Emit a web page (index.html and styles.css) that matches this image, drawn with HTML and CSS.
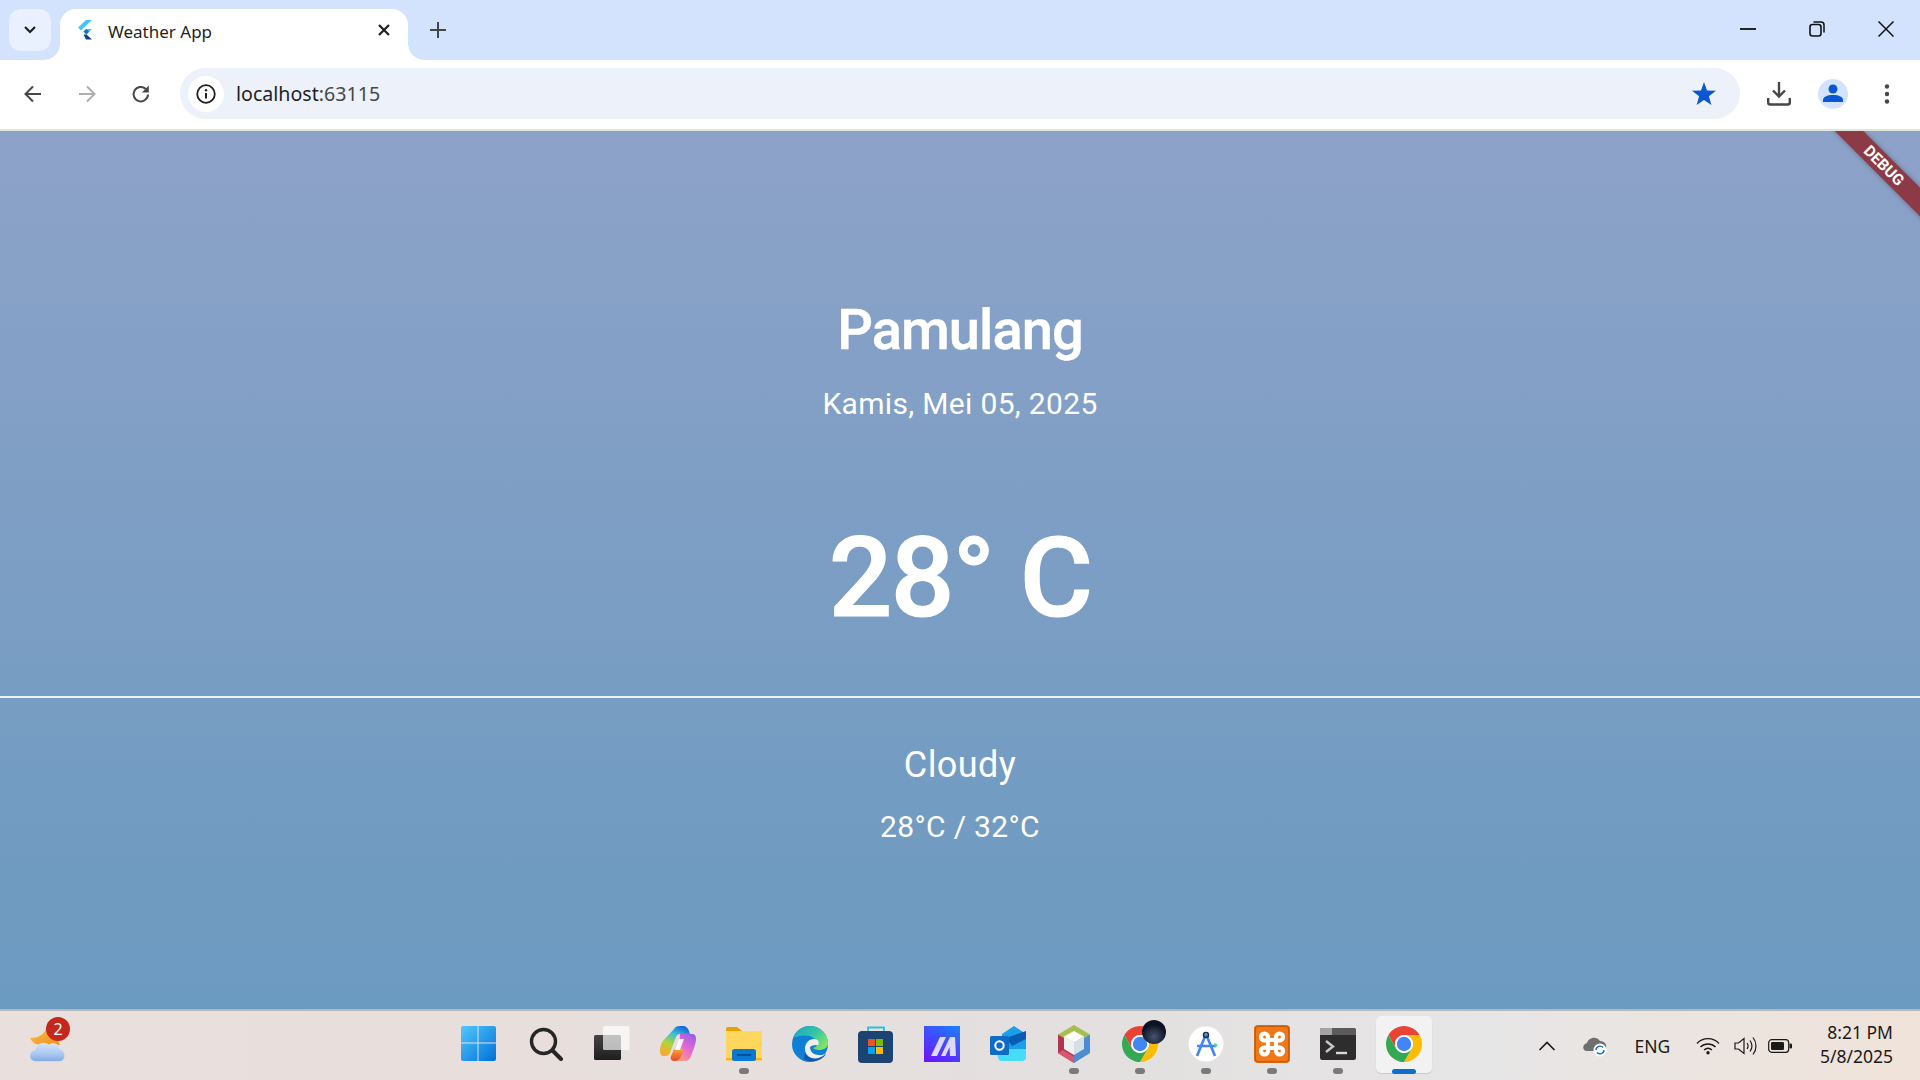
FILE: index.html
```html
<!DOCTYPE html>
<html lang="id">
<head>
<meta charset="utf-8">
<title>Weather App</title>
<link rel="stylesheet" href="styles.css">
</head>
<body>
<svg class="defs" width="0" height="0" aria-hidden="true">
  <symbol id="chrome" viewBox="0 0 40 40">
    <path fill="#ea4335" d="M2.7 10A20 20 0 0 1 37.3 10H20A10 10 0 0 0 11.34 25Z"/>
    <path fill="#fbbc04" d="M37.3 10A20 20 0 0 1 20 40L28.66 25A10 10 0 0 0 20 10Z"/>
    <path fill="#34a853" d="M20 40A20 20 0 0 1 2.7 10L11.34 25A10 10 0 0 0 28.66 25Z"/>
    <circle cx="20" cy="20" r="10" fill="#fff"/>
    <circle cx="20" cy="20" r="8" fill="#4285f4"/>
  </symbol>
</svg>
<div class="window">
  <header class="tabstrip">
    <div class="tabsearch">
      <svg width="14" height="10" viewBox="0 0 14 10"><path d="M2 2l5 5 5-5" fill="none" stroke="#1f1f1f" stroke-width="2.2"/></svg>
    </div>
    <div class="tab">
      <svg class="favicon" width="16" height="20" viewBox="0 0 16 20">
        <path fill="#45c6f6" d="M9 0h6L4 10.5 1 7.5z"/>
        <path fill="#45c6f6" d="M9 9h6l-5.5 5.5-3-3z"/>
        <path fill="#1d6fc4" d="M6.500 11.500l3-2.500 2.500 2.500-2.500 3z"/>
        <path fill="#0f3f8f" d="M6.500 14.500l3 0 5.500 5h-6z"/>
      </svg>
      <span class="tabtitle">Weather App</span>
      <svg class="tabclose" width="14" height="14" viewBox="0 0 14 14"><path d="M2 2l10 10M12 2L2 12" stroke="#1f1f1f" stroke-width="2.200"/></svg>
    </div>
    <svg class="newtab" width="16" height="16" viewBox="0 0 16 16"><path d="M8 0v16M0 8h16" stroke="#444746" stroke-width="2"/></svg>
    <div class="winctl">
      <svg width="16" height="16" viewBox="0 0 16 16"><path d="M0 8h16" stroke="#111" stroke-width="1.800"/></svg>
      <svg width="16" height="16" viewBox="0 0 16 16"><rect x="1" y="3.500" width="11" height="11.500" rx="2.500" fill="none" stroke="#111" stroke-width="1.600"/><path d="M4.500 1h7.500a3 3 0 0 1 3 3v7.500" fill="none" stroke="#111" stroke-width="1.500"/></svg>
      <svg width="16" height="16" viewBox="0 0 16 16"><path d="M.5.500l15 15M15.500.500l-15 15" stroke="#111" stroke-width="1.500"/></svg>
    </div>
  </header>

  <nav class="toolbar">
    <div class="tbtn"><svg width="20" height="20" viewBox="0 0 20 20"><path d="M18 10H3M10 2.500L2.500 10l7.500 7.500" fill="none" stroke="#474747" stroke-width="2"/></svg></div>
    <div class="tbtn"><svg width="20" height="20" viewBox="0 0 20 20"><path d="M2 10h15M10 2.500l7.500 7.500-7.500 7.500" fill="none" stroke="#aeaeae" stroke-width="2"/></svg></div>
    <div class="tbtn"><svg width="20" height="20" viewBox="0 0 20 20"><path d="M17 10.500A7.200 7.200 0 1 1 14.800 5" fill="none" stroke="#474747" stroke-width="2"/><path d="M17.800 1.500v7h-7z" fill="#474747"/></svg></div>
    <div class="omnibox">
      <div class="chip"><svg width="20" height="20" viewBox="0 0 20 20"><circle cx="10" cy="10" r="8.800" fill="none" stroke="#1f1f1f" stroke-width="1.800"/><path d="M10 9v5.500" stroke="#1f1f1f" stroke-width="2"/><circle cx="10" cy="6.200" r="1.200" fill="#1f1f1f"/></svg></div>
      <span class="url">localhost<span class="port">:63115</span></span>
      <svg class="star" width="24" height="23" viewBox="0 0 24 23"><path fill="#0b57d0" d="M12 0l3 8.400 9 .3-7.100 5.500 2.500 8.800L12 17.900 4.600 23l2.500-8.800L0 8.700l9-.3z"/></svg>
    </div>
    <div class="tbtn first"><svg width="24" height="24" viewBox="0 0 24 24"><path d="M12 0v14M6 8.500l6 6 6-6" fill="none" stroke="#474747" stroke-width="2.400"/><path d="M1.200 16v4.500a2 2 0 0 0 2 2h17.600a2 2 0 0 0 2-2V16" fill="none" stroke="#474747" stroke-width="2.400"/></svg></div>
    <div class="tbtn"><div class="avatar"><svg width="20" height="20" viewBox="0 0 20 20"><circle cx="10" cy="5" r="4.500" fill="#0b57d0"/><path fill="#0b57d0" d="M0 18v-2c0-3 4-5 10-5s10 2 10 5v2z"/></svg></div></div>
    <div class="tbtn"><svg width="6" height="20" viewBox="0 0 6 20"><circle cx="3" cy="2.500" r="2.200" fill="#474747"/><circle cx="3" cy="10" r="2.200" fill="#474747"/><circle cx="3" cy="17.500" r="2.200" fill="#474747"/></svg></div>
  </nav>

  <main class="app">
    <h1 class="city">Pamulang</h1>
    <p class="date">Kamis, Mei 05, 2025</p>
    <p class="temp">28° C</p>
    <hr class="rule">
    <p class="cond">Cloudy</p>
    <p class="range">28°C / 32°C</p>
    <div class="debug">DEBUG</div>
  </main>

  <footer class="taskbar">
    <div class="widget">
      <svg width="40" height="38" viewBox="0 0 40 38">
        <defs><linearGradient id="cl" x1="0" y1="0" x2="0" y2="1"><stop offset="0" stop-color="#d4e3f8"/><stop offset=".6" stop-color="#a9c8f0"/><stop offset="1" stop-color="#7ea9e3"/></linearGradient>
        <linearGradient id="mn" x1="0" y1="0" x2="1" y2="1"><stop offset="0" stop-color="#f8c044"/><stop offset="1" stop-color="#ef8f22"/></linearGradient></defs>
        <path fill="url(#mn)" d="M18 1c0 6-6 11-16 11 3 5 6 7 12 7h18l-6-14c-3-2-5-3-8-4z"/>
        <path fill="url(#cl)" stroke="#e3ecf8" stroke-width=".5" d="M8 35.500c-8 0-8-10.500-1-11.500 1-6 9-9 14-5 4-3 10-1 11 4 6 1 7 12.500-1 12.500z"/>
      </svg>
      <span class="badge">2</span>
    </div>
    <div class="apps">
      <div class="app-btn"><svg class="win" width="35" height="35" viewBox="0 0 36 36"><defs><linearGradient id="w" x1="0" y1="0" x2="1" y2="1"><stop offset="0" stop-color="#52c8fb"/><stop offset="1" stop-color="#0070d8"/></linearGradient></defs><path fill="url(#w)" d="M2 0h15v17H0V2a2 2 0 0 1 2-2zM18 0h16a2 2 0 0 1 2 2v15H18zM0 18h17v18H2a2 2 0 0 1-2-2zM18 18h18v16a2 2 0 0 1-2 2H18z"/></svg></div>
      <div class="app-btn"><svg width="34" height="34" viewBox="0 0 34 34"><circle cx="14.500" cy="14.500" r="12" fill="none" stroke="#262626" stroke-width="3.400"/><path d="M23.500 23.500L32 32" stroke="#262626" stroke-width="4" stroke-linecap="round"/></svg></div>
      <div class="app-btn"><svg width="36" height="36" viewBox="0 0 36 36"><defs><linearGradient id="tv" x1="0" y1="0" x2="0" y2="1"><stop offset="0" stop-color="#444"/><stop offset="1" stop-color="#1e1e1e"/></linearGradient></defs><rect x="0" y="9" width="27" height="25" rx="1.500" fill="url(#tv)"/><rect x="9" y="0" width="26.500" height="24" rx="1.500" fill="#fff" fill-opacity=".68"/></svg></div>
      <div class="app-btn"><svg width="36" height="36" viewBox="0 0 36 36"><defs><linearGradient id="c1" x1=".7" y1="0" x2=".3" y2="1"><stop offset="0" stop-color="#1467d8"/><stop offset=".3" stop-color="#35c0d8"/><stop offset=".65" stop-color="#b7d334"/><stop offset="1" stop-color="#f9a833"/></linearGradient><linearGradient id="c2" x1=".8" y1="0" x2=".2" y2="1"><stop offset="0" stop-color="#9a5ee8"/><stop offset=".5" stop-color="#e86ad0"/><stop offset="1" stop-color="#f6a37a"/></linearGradient><linearGradient id="c3" x1=".5" y1="0" x2=".5" y2="1"><stop offset="0" stop-color="#f9a833"/><stop offset="1" stop-color="#e8452c"/></linearGradient></defs><path fill="url(#c2)" d="M20 8h12c3 0 4 2 4 5 0 3-1 6-2 9l-3 8c-1 3-3 5-7 5H14c3-2 4-4 5-7z"/><path fill="url(#c1)" d="M14 3c1-2 3-3 6-3h3c3 0 5 2 6 5l1 3H20c-2 0-3 1-4 3l-6 16c-1 2-2 3-5 3H4c-3 0-4-2-4-6 0-3 1-5 2-8z"/><path fill="url(#c3)" d="M14 35c-3 0-4-3-3-5l3-7h10l-3 7c-1 3-3 5-7 5z"/><path fill="#fff" fill-opacity=".9" d="M19 13h5l-4 11h-5z"/></svg></div>
      <div class="app-btn"><svg width="36" height="34" viewBox="0 0 36 34"><path fill="#e3a400" d="M0 2a2 2 0 0 1 2-2h9l5 4h20v6H0z"/><path fill="#ffd75e" d="M0 4h36v29H0z"/><rect y="31" width="36" height="2.500" fill="#f8b90f"/><rect x="6" y="22" width="24" height="12" rx="2.500" fill="#0a78d0"/><path d="M11 28h14" stroke="#043e79" stroke-width="1.400"/></svg></div>
      <div class="app-btn"><svg width="36" height="36" viewBox="0 0 36 36"><defs><linearGradient id="e1" x1="0" y1="0" x2="1" y2=".6"><stop offset="0" stop-color="#1aa5c8"/><stop offset=".6" stop-color="#35c6a2"/><stop offset="1" stop-color="#7fe06a"/></linearGradient></defs><circle cx="18" cy="18" r="18" fill="#0f7fd6"/><path fill="url(#e1)" d="M1 12C4 4 11 0 18 0c10 0 18 8 18 17 0 5-4 7-9 7-3 0-5-1-6-2 4-1 6-5 2-9-5-5-16-4-22-1z"/><path fill="#0d5aa7" d="M12 33c8 5 19 1 22-5-4 3-9 4-14 2-3-1-5-4-5-7-1 3-3 6-3 10z"/><path fill="#f0eeee" d="M13 23c0-6 4-10 9-10 4 0 6 3 4 6-2 0-6 0-8 2 0 5 4 8 9 8 2 0 4 0 6-1-4 5-13 6-17 2-2-2-3-4-3-7z"/></svg></div>
      <div class="app-btn"><svg width="36" height="38" viewBox="0 0 36 38"><path d="M10 7V2.500h16V7" fill="none" stroke="#28c0e8" stroke-width="1.800"/><rect y="6" width="35" height="32" rx="4" fill="#1b4472"/><rect x="10" y="14" width="7" height="7" fill="#f25022"/><rect x="18" y="14" width="7" height="7" fill="#7fba00"/><rect x="10" y="22" width="7" height="7" fill="#00a4ef"/><rect x="18" y="22" width="7" height="7" fill="#ffb900"/></svg></div>
      <div class="app-btn"><svg width="36" height="36" viewBox="0 0 36 36"><defs><linearGradient id="m" x1=".8" y1="0" x2=".2" y2="1"><stop offset="0" stop-color="#1f79ff"/><stop offset="1" stop-color="#6a16ff"/></linearGradient></defs><rect width="36" height="36" fill="url(#m)"/><path fill="#dcd8ff" d="M7 30L16 11h6L13 30zM17 30l9-19h5l1 19h-6l-.5-9-4 9z"/></svg></div>
      <div class="app-btn"><svg width="36" height="36" viewBox="0 0 36 36"><path fill="#1aa0e8" d="M12 8L24 0l12 8v22a4 4 0 0 1-4 4H12z"/><path fill="#0a5cb2" d="M16 12L36 5v8L22 20z"/><path fill="#48dcfb" d="M7 23h29v8a4 4 0 0 1-4 4H12a4 4 0 0 1-4-3z"/><rect y="10" width="19" height="19" rx="1.500" fill="#0f6cc4"/><circle cx="9.500" cy="19.500" r="4.200" fill="none" stroke="#fff" stroke-width="2"/></svg></div>
      <div class="app-btn"><svg width="34" height="38" viewBox="0 0 34 38"><path fill="#a6c050" d="M17 0l16 9.500-16 9-16-9z"/><path fill="#4e8bd0" d="M33 9.500V28L17 38V18.500z"/><path fill="#b3344f" d="M1 9.500V28l16 10V18.500z"/><path fill="#d8566e" d="M1 28l5-3 11 6.500V38z"/><path fill="#fff" d="M17 6l10 5.500-10 6-10-6z"/><path fill="#f0f0f2" d="M7 11.500l10 6V30L7 24z"/><path fill="#d5dfe9" d="M27 11.500l-10 6V30l10-6z"/></svg></div>
      <div class="app-btn">
        <svg width="36" height="36" viewBox="0 0 36 36"><use href="#chrome"/></svg>
        <span class="dark-ball"></span>
      </div>
      <div class="app-btn"><svg width="36" height="36" viewBox="0 0 36 36"><circle cx="18" cy="18" r="17.500" fill="#fff"/><path d="M18 8L9 30M18 8l9 22M9 20h18" fill="none" stroke="#4285f4" stroke-width="2.600"/><circle cx="18" cy="9" r="2.500" fill="none" stroke="#1f2a44" stroke-width="1.500"/><path d="M26 17l4 2-3 3z" fill="#3ddc84"/></svg></div>
      <div class="app-btn"><svg width="36" height="38" viewBox="0 0 36 38"><rect width="36" height="38" rx="4" fill="#f07818"/><rect x="1.200" y="1.200" width="33.600" height="35.600" rx="3" fill="none" stroke="#c75d0a" stroke-width="1.500"/><path d="M14 15h8v8h-8zM14 15v-3a3.500 3.500 0 1 0-3.500 3.500zM22 15v-3a3.500 3.500 0 1 1 3.500 3.500zM14 23v3a3.500 3.500 0 1 1-3.500-3.500zM22 23v3a3.500 3.500 0 1 0 3.500-3.500z" fill="none" stroke="#fff" stroke-width="4.200"/></svg></div>
      <div class="app-btn"><svg width="36" height="32" viewBox="0 0 36 32"><rect width="36" height="32" rx="2.500" fill="#2d2d2d"/><path d="M0 2.500A2.500 2.500 0 0 1 2.500 0H33.500A2.500 2.500 0 0 1 36 2.500V7H0z" fill="#5b5b5b"/><path d="M0 2.500A2.500 2.500 0 0 1 2.500 0H12V7H0z" fill="#a3a3a3"/><path d="M6 13l7 5.500-7 5.500" fill="none" stroke="#c8c8c8" stroke-width="2.400"/><path d="M16 25h11" stroke="#d8d8d8" stroke-width="2.400"/></svg></div>
      <div class="app-btn active"><svg width="36" height="36" viewBox="0 0 36 36"><use href="#chrome"/></svg></div>
    </div>
    <div class="tray">
      <svg class="t-up" width="18" height="10" viewBox="0 0 18 10"><path d="M1.500 9L9 1.500 16.500 9" fill="none" stroke="#1a1a1a" stroke-width="1.700"/></svg>
      <svg class="t-cloud" width="26" height="22" viewBox="0 0 26 22"><path fill="#6f6f6f" d="M5 16c-5 0-5-7 0-8 1-5 9-8 13-2 5 0 7 4 6 7l-5 3z"/><circle cx="18" cy="15" r="6.500" fill="#fff"/><path d="M14 15a4 4 0 0 1 7-2.500M22 15a4 4 0 0 1-7 2.500" fill="none" stroke="#0f6cc4" stroke-width="1.400"/></svg>
      <span class="lang">ENG</span>
      <svg class="t-wifi" width="24" height="18" viewBox="0 0 24 18"><path d="M1 6.500c6-6.500 16-6.500 22 0M4.500 10c4-4 11-4 15 0M8 13c2.500-2.200 5.500-2.200 8 0" fill="none" stroke="#1a1a1a" stroke-width="1.300"/><circle cx="12" cy="15.800" r="1.700" fill="#1a1a1a"/></svg>
      <svg class="t-vol" width="24" height="20" viewBox="0 0 24 20"><path d="M1 7h3.500L10 2.500v15L4.500 13H1z" fill="none" stroke="#1a1a1a" stroke-width="1.200"/><path d="M13 7c1.500 2 1.500 4 0 6M16 4.500c2.500 3.500 2.500 7.500 0 11M19 1.500c4 5 4 12 0 17" fill="none" stroke="#1a1a1a" stroke-width="1.200"/></svg>
      <svg class="t-bat" width="24" height="14" viewBox="0 0 24 14"><rect x=".7" y=".7" width="20" height="12.600" rx="3" fill="none" stroke="#1a1a1a" stroke-width="1.200"/><rect x="3" y="3" width="13" height="8" rx="1.200" fill="#1a1a1a"/><rect x="21.500" y="4.500" width="2.500" height="5" rx="1" fill="#1a1a1a"/></svg>
      <div class="clock"><span>8:21 PM</span><span>5/8/2025</span></div>
    </div>
  </footer>
</div>
</body>
</html>
```
FILE: styles.css
```css
* { box-sizing: border-box; }
html, body { margin: 0; height: 100%; }
body { font-family: "Noto Sans", sans-serif; overflow: hidden; }
.defs { position: absolute; }
.window { display: flex; flex-direction: column; height: 1080px; }

.tabstrip { height: 60px; flex: none; background: #d3e3fd; display: flex; align-items: flex-start; padding: 9px 0 0 9px; }
.tabsearch { width: 42px; height: 42px; border-radius: 12px; background: #e9f0fe; display: flex; align-items: center; justify-content: center; }
.tab { position: relative; width: 348px; height: 51px; margin-left: 9px; background: #fff; border-radius: 16px 16px 0 0; display: flex; align-items: center; padding: 0 17px 7px; }
.tab::before, .tab::after { content: ""; position: absolute; bottom: 0; width: 16px; height: 16px; }
.tab::before { left: -16px; background: radial-gradient(circle at 0 0, transparent 15.5px, #fff 16px); }
.tab::after { right: -16px; background: radial-gradient(circle at 100% 0, transparent 15.5px, #fff 16px); }
.favicon { margin-top: -2px; }
.tabtitle { margin-left: 15px; font-size: 17px; color: #1f1f1f; flex: 1; margin-top: 1px; }
.tabclose { margin-top: -2px; }
.newtab { margin: 13px 0 0 22px; }
.winctl { margin-left: auto; display: flex; gap: 53px; padding: 12px 26px 0 0; }

.toolbar { height: 71px; flex: none; background: #fff; border-radius: 16px 16px 0 0; border-bottom: 2px solid #e3e4dc; display: flex; align-items: center; padding: 0 6px 2px; }
.tbtn { width: 54px; height: 54px; flex: none; display: flex; align-items: center; justify-content: center; }
.tbtn.first { width: 55px; margin-left: 11px; }
.omnibox { flex: 1; height: 51px; margin-left: 12px; border-radius: 26px; background: #ecf1fa; display: flex; align-items: center; padding: 0 24px 0 8px; }
.chip { width: 36px; height: 36px; border-radius: 50%; background: #fff; display: flex; align-items: center; justify-content: center; }
.url { margin-left: 12px; font-size: 19.600px; color: #1f1f1f; flex: 1; }
.port { color: #474747; }
.avatar { width: 30px; height: 30px; border-radius: 50%; background: #d3e3fd; display: flex; align-items: flex-end; justify-content: center; padding-bottom: 5px; }

.app { flex: 1; position: relative; overflow: hidden; background: linear-gradient(#8da2c8, #6b9ac0); color: #fff; font-family: Roboto, sans-serif; text-align: center; padding-top: 167px; }
.app p, .app h1 { margin: 0; }
.city { font-size: 56px; line-height: 64px; font-weight: 500; letter-spacing: -.9px; -webkit-text-stroke: .5px #fff; }
.date { font-size: 30px; line-height: 36px; letter-spacing: .33px; margin-top: 24px !important; }
.temp { font-size: 112px; line-height: 120px; font-weight: 500; letter-spacing: -1.700px; -webkit-text-stroke: 1.200px #fff; margin-top: 96px !important; }
.rule { height: 2px; margin: 58px 0 0; border: 0; background: #eaf1f7; }
.cond { font-size: 36px; line-height: 44px; letter-spacing: .4px; margin-top: 45px !important; }
.range { font-size: 30px; line-height: 36px; letter-spacing: .33px; margin-top: 22px !important; }
.debug { position: absolute; top: 24px; right: -63px; width: 200px; height: 20px; padding-left: 2px; background: #8c3a46; box-shadow: 0 0 5px rgba(0,0,0,.35); transform: rotate(45deg); font-size: 15.500px; font-weight: 700; line-height: 20px; text-align: center; }

.taskbar { height: 71px; flex: none; border-top: 2px solid #b7b9ba; background: linear-gradient(90deg, #e9e0de 0%, #e8dfdd 30%, #e3e0e0 60%, #e7e6e6 78%, #f0e3d9 100%); display: grid; grid-template-columns: 447px auto 1fr; align-items: center; color: #1a1a1a; }
.widget { position: relative; width: 40px; height: 38px; margin: -1px 0 0 28px; }
.badge { position: absolute; left: 18px; top: -9px; width: 24px; height: 24px; border-radius: 50%; background: #c4281c; color: #fff; font-size: 16px; line-height: 24px; text-align: center; }
.apps { display: flex; align-items: center; align-self: start; }
.app-btn { position: relative; width: 66px; height: 65px; display: flex; align-items: center; justify-content: center; }
.win { margin-right: 3px; }
.app-btn:nth-child(5)::after, .app-btn:nth-child(10)::after, .app-btn:nth-child(11)::after, .app-btn:nth-child(12)::after, .app-btn:nth-child(13)::after, .app-btn:nth-child(14)::after { content: ""; position: absolute; left: 50%; bottom: 2px; width: 10px; height: 6px; margin-left: -5px; border-radius: 3px; background: #7a7a7a; }
.app-btn.active::before { content: ""; position: absolute; left: 5px; top: 5px; width: 56px; height: 57px; background: #f2f2f2; border-radius: 5px; box-shadow: 0 1px 1px rgba(0,0,0,.12); }
.app-btn.active svg { position: relative; }
.app-btn.active::after { content: ""; position: absolute; left: 50%; bottom: 2px; width: 24px; height: 5px; margin-left: -12px; border-radius: 3px; background: #0a70cc; }
.dark-ball { position: absolute; left: 35px; top: 9px; width: 24px; height: 24px; border-radius: 50%; background: radial-gradient(circle at 50% 70%, #44546e, #0b1322 60%); }

.tray { display: flex; align-items: center; height: 100%; position: relative; padding-right: 27px; }
.t-up { margin-left: 101px; }
.t-cloud { margin-left: 26px; }
.lang { margin-left: 26.500px; font-size: 17.500px; }
.t-wifi { margin-left: 25.500px; }
.t-vol { margin-left: 14.200px; }
.t-bat { margin-left: 9.600px; }
.clock { margin-left: auto; display: flex; flex-direction: column; align-items: flex-end; font-size: 17.500px; line-height: 24px; margin-top: -4px; }
```
